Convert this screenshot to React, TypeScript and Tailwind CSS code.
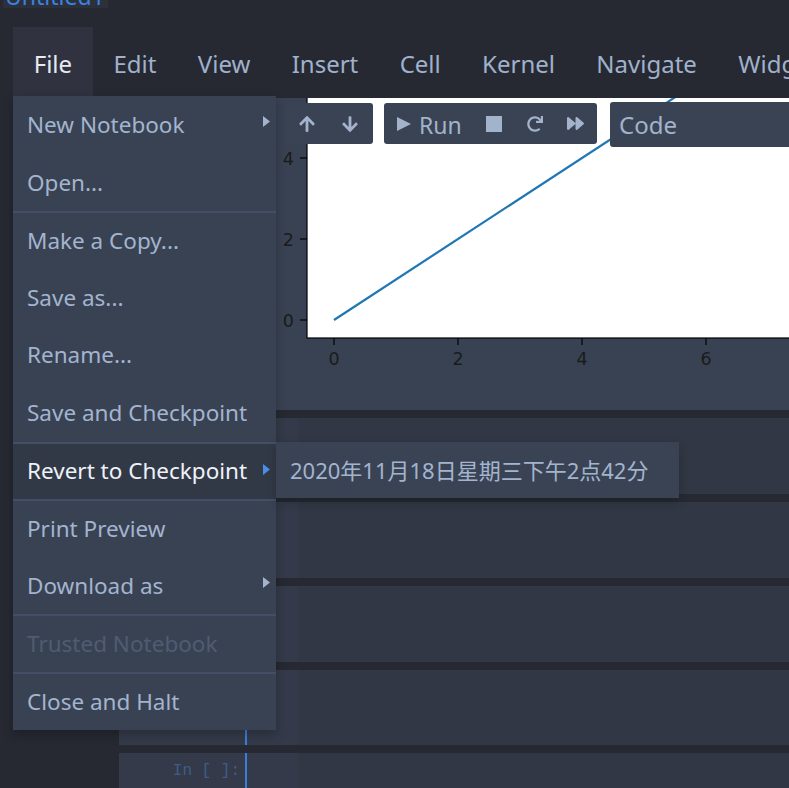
import { FaArrowUp, FaArrowDown, FaRedo, FaForward } from "react-icons/fa";

type Item = { label: string; arrow?: boolean; sep?: boolean; active?: boolean; disabled?: boolean };

const fileItems: Item[] = [
  { label: "New Notebook", arrow: true },
  { label: "Open..." },
  { label: "Make a Copy...", sep: true },
  { label: "Save as..." },
  { label: "Rename..." },
  { label: "Save and Checkpoint" },
  { label: "Revert to Checkpoint", arrow: true, sep: true, active: true },
  { label: "Print Preview", sep: true },
  { label: "Download as", arrow: true },
  { label: "Trusted Notebook", sep: true, disabled: true },
  { label: "Close and Halt", sep: true },
];

const menus = ["File", "Edit", "View", "Insert", "Cell", "Kernel", "Navigate", "Widgets", "Help"];

const Caret = ({ color }: { color: string }) => (
  <svg width="7" height="11" viewBox="0 0 7 11" className="absolute right-[6px] top-[20px]">
    <path d="M0 0 L7 5.5 L0 11 Z" fill={color} />
  </svg>
);

const Plot = () => {
  const xs = [0, 2, 4, 6];
  const ys = [0, 2, 4];
  return (
    <svg width="513" height="290" viewBox="0 0 513 290" className="block">
      <rect x="31" y="-10" width="500" height="250" fill="#ffffff" stroke="#000000" strokeWidth="1.2" />
      <line x1="58" y1="222" x2="430" y2="-21" stroke="#1f77b4" strokeWidth="2.2" />
      {ys.map((v) => {
        const y = 222 - v * 40.5;
        return (
          <g key={v}>
            <line x1="24" y1={y} x2="31" y2={y} stroke="#000" strokeWidth="1.2" />
            <text x="18" y={y + 6.5} textAnchor="end" fontSize="17.5" fill="#1b1b1b" fontFamily="'DejaVu Sans', sans-serif">
              {v}
            </text>
          </g>
        );
      })}
      {xs.map((v) => {
        const x = 58 + v * 62;
        return (
          <g key={v}>
            <line x1={x} y1="240" x2={x} y2="247" stroke="#000" strokeWidth="1.2" />
            <text x={x} y="267" textAnchor="middle" fontSize="17.5" fill="#1b1b1b" fontFamily="'DejaVu Sans', sans-serif">
              {v}
            </text>
          </g>
        );
      })}
    </svg>
  );
};

const Cell = ({ prompt, h }: { prompt?: string; h: string }) => (
  <div className={`flex ${h} bg-[#313744]`}>
    <div className="w-[126px] bg-[#343a49] pt-[8px] pr-[5px] text-right font-['Liberation_Mono',monospace] text-[16px] leading-[20px] text-[#3f5d86]">
      {prompt}
    </div>
    <div className="w-[2px] bg-[#3b7ddd]" />
    <div className="w-[51px] bg-[#343a49]" />
    <div className="flex-1" />
  </div>
);

export default function App() {
  return (
    <div className="relative h-[788px] w-[789px] overflow-hidden bg-[#262932] font-['Noto_Sans',sans-serif]">
      {/* title, mostly scrolled off */}
      <div className="h-[8px] overflow-hidden">
        <div className="ml-[3px] w-[105px] rounded-b-[3px] bg-[#2c303b] pl-[2px]">
          <div className="-mt-[19px] whitespace-nowrap text-[23px] leading-[30px] text-[#3b82e0]">Untitled1</div>
        </div>
      </div>

      {/* menubar */}
      <div className="mt-[19px] flex h-[69px] whitespace-nowrap pl-[13px]">
        {menus.map((m) => (
          <div
            key={m}
            className={`flex items-center px-[20.7px] pt-[5px] text-[24px] ${
              m === "File" ? "bg-[#30323f] text-[#e6eaf1]" : "text-[#a0b1cc]"
            }`}
          >
            {m}
          </div>
        ))}
      </div>

      {/* notebook */}
      <div className="mt-[2px] pl-[119px]">
        <div className="flex h-[312px] bg-[#394253]">
          <div className="w-[157px] shrink-0" />
          <Plot />
        </div>
        <div className="mt-[8px]">
          <Cell h="h-[76px]" />
        </div>
        <div className="mt-[8px]">
          <Cell h="h-[76px]" />
        </div>
        <div className="mt-[8px]">
          <Cell h="h-[76px]" />
        </div>
        <div className="mt-[8px]">
          <Cell h="h-[75px]" />
        </div>
        <div className="mt-[8px]">
          <Cell h="h-[60px]" prompt="In [ ]:" />
        </div>
      </div>

      {/* cell toolbar */}
      <div className="absolute left-[285px] top-[103px] flex items-start text-[#a3b3cc]">
        <div className="flex h-[41px] w-[88px] items-center gap-[25px] rounded-[3px] bg-[#3a4354] pl-[13px]">
          <FaArrowUp size={18} />
          <FaArrowDown size={18} />
        </div>
        <div className="ml-[11px] flex h-[41px] w-[213px] items-center rounded-[3px] bg-[#3a4354] pl-[13px]">
          <svg width="14" height="16" viewBox="0 0 14 16">
            <path d="M0 1 L14 8 L0 15 Z" fill="#a3b3cc" />
          </svg>
          <span className="ml-[8px] pt-[3px] text-[23px] leading-none">Run</span>
          <div className="ml-[24px] h-[16px] w-[16px] bg-[#a3b3cc]" />
          <FaRedo size={16} className="ml-[25px]" />
          <FaForward size={17} className="ml-[24px]" />
        </div>
        <div className="-mt-[1px] ml-[13px] flex h-[45px] w-[200px] items-center rounded-[3px] bg-[#3a4354] pl-[9px] text-[24px]">
          Code
        </div>
      </div>

      {/* File dropdown */}
      <div className="absolute left-[13px] top-[96px] w-[263px] bg-[#394253] shadow-[0_4px_10px_rgba(0,0,0,0.25)]">
        {fileItems.map((it) => (
          <div
            key={it.label}
            className={`relative flex h-[57.6px] items-center whitespace-nowrap pl-[14px] text-[22.5px] ${
              it.sep ? "border-t-2 border-[#444e66]" : ""
            } ${
              it.active
                ? "bg-[#323946] text-[#eef2f8]"
                : it.disabled
                ? "text-[#4f5c72]"
                : "text-[#a3b4cf]"
            }`}
          >
            {it.label}
            {it.arrow && <Caret color={it.active ? "#4a8fe7" : "#a3b4cf"} />}
          </div>
        ))}
      </div>

      {/* checkpoint submenu */}
      <div className="absolute left-[276px] top-[442px] flex h-[56px] w-[403px] items-center bg-[#3a4354] pl-[14px] font-['Noto_Sans','Noto_Sans_CJK_SC',sans-serif] text-[22px] text-[#a3b4cf] shadow-[0_4px_10px_rgba(0,0,0,0.2)]">
        2020年11月18日星期三下午2点42分
      </div>
    </div>
  );
}
